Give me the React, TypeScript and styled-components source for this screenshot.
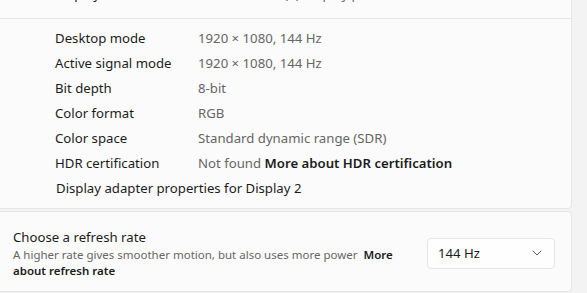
import styled, { createGlobalStyle } from 'styled-components';

const COLORS = {
    page: '#f3f3f3',
    card: '#fbfbfb',
    border: '#e5e5e5',
    text: '#1b1b1b',
    secondary: '#666666',
    control: '#fefefe'
};

const GlobalStyle = createGlobalStyle`
    html, body {
        margin: 0;
        background: ${COLORS.page};
        font-family: 'Noto Sans', 'Open Sans', sans-serif;
        color: ${COLORS.text};
        overflow: hidden;
    }
`;

const details: { label: string; value: string; link?: string }[] = [
    { label: 'Desktop mode', value: '1920 × 1080, 144 Hz' },
    { label: 'Active signal mode', value: '1920 × 1080, 144 Hz' },
    { label: 'Bit depth', value: '8-bit' },
    { label: 'Color format', value: 'RGB' },
    { label: 'Color space', value: 'Standard dynamic range (SDR)' },
    {
        label: 'HDR certification',
        value: 'Not found',
        link: 'More about HDR certification'
    }
];

const ChevronDown = () => (
    <svg width="10" height="6" viewBox="0 0 10 6" fill="none">
        <path
            d="M1 1l4 4 4-4"
            stroke="#5f5f5f"
            strokeWidth="1"
            strokeLinecap="round"
            strokeLinejoin="round"
        />
    </svg>
);

export default function App() {
    return (
        <>
            <GlobalStyle />
            <Page>
                <Card>
                    <TopSection>
                        <DetailRow>
                            <Label>Display</Label>
                            <Value>Connected to (1) Display port</Value>
                        </DetailRow>
                    </TopSection>
                    <Details>
                        {details.map((d) => (
                            <DetailRow key={d.label}>
                                <Label>{d.label}</Label>
                                <Value>
                                    {d.value}
                                    {d.link ? (
                                        <>
                                            {' '}
                                            <LinkText>{d.link}</LinkText>
                                        </>
                                    ) : null}
                                </Value>
                            </DetailRow>
                        ))}
                        <AdapterLink>
                            Display adapter properties for Display 2
                        </AdapterLink>
                    </Details>
                </Card>
                <Card>
                    <SettingRow>
                        <SettingText>
                            <SettingTitle>Choose a refresh rate</SettingTitle>
                            <SettingDesc>
                                A higher rate gives smoother motion, but also
                                uses more power{'  '}
                                <DescLink>More about refresh rate</DescLink>
                            </SettingDesc>
                        </SettingText>
                        <Dropdown>
                            <span>144 Hz</span>
                            <ChevronDown />
                        </Dropdown>
                    </SettingRow>
                </Card>
            </Page>
        </>
    );
}

const Page = styled.div`
    display: flex;
    flex-direction: column;
    gap: 2px;
    margin: -20px 15px 0 -4px;
`;

const Card = styled.div`
    background: ${COLORS.card};
    border: 1px solid ${COLORS.border};
    border-radius: 4px;
`;

const TopSection = styled.div`
    padding: 0 0 12px 58px;
    border-bottom: 1px solid ${COLORS.border};
`;

const Details = styled.div`
    padding: 6px 0 8px 58px;
`;

const DetailRow = styled.div`
    display: grid;
    grid-template-columns: 143px 1fr;
    height: 25px;
    align-items: center;
    font-size: 13.2px;
`;

const Label = styled.span`
    color: ${COLORS.text};
    white-space: nowrap;
`;

const Value = styled.span`
    color: ${COLORS.secondary};
    white-space: nowrap;
`;

const LinkText = styled.span`
    color: ${COLORS.text};
    font-weight: 600;
`;

const AdapterLink = styled.div`
    height: 25px;
    display: flex;
    align-items: center;
    padding-left: 1px;
    font-size: 13.2px;
    color: ${COLORS.text};
`;

const SettingRow = styled.div`
    display: flex;
    align-items: center;
    justify-content: space-between;
    padding: 15px 16px 12px 16px;
`;

const SettingText = styled.div`
    display: flex;
    flex-direction: column;
    width: 395px;
`;

const SettingTitle = styled.div`
    font-size: 13.2px;
    line-height: 20px;
    color: ${COLORS.text};
`;

const SettingDesc = styled.div`
    font-size: 11.5px;
    line-height: 16px;
    color: ${COLORS.secondary};
    white-space: pre-wrap;
`;

const DescLink = styled.span`
    color: ${COLORS.text};
    font-weight: 600;
`;

const Dropdown = styled.div`
    box-sizing: border-box;
    width: 128px;
    height: 31px;
    display: flex;
    align-items: center;
    justify-content: space-between;
    padding: 0 12px 0 10px;
    background: ${COLORS.control};
    border: 1px solid ${COLORS.border};
    border-radius: 4px;
    font-size: 13.2px;
    color: ${COLORS.text};
`;
